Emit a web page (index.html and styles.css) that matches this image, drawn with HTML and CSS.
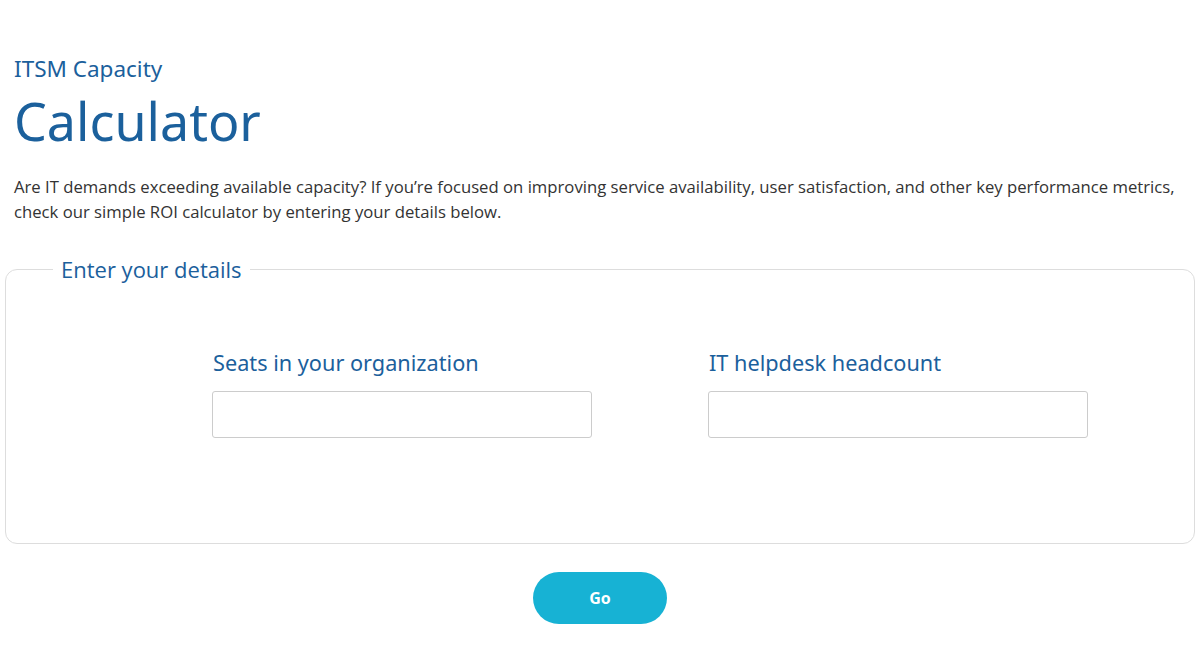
FILE: index.html
```html
<!DOCTYPE html>
<html lang="en">
<head>
  <meta charset="UTF-8">
  <title>ITSM Capacity Calculator</title>
  <meta name="viewport" content="width=device-width, initial-scale=1.0">
  <link rel="stylesheet" href="styles.css">
</head>
<body>

  <div class="page">
    <div class="intro">
      <h3 class="eyebrow">ITSM Capacity</h3>
      <h1 class="title">Calculator</h1>
      <p class="lead">Are IT demands exceeding available capacity? If you’re focused on improving service availability, user satisfaction, and other key performance metrics, check our simple ROI calculator by entering your details below.</p>
    </div>

    <form id="capacityForm">
      <fieldset class="details">
        <legend>Enter your details</legend>
        <div class="fields">
          <div class="field">
            <label for="seats">Seats in your organization</label>
            <input type="text" id="seats" name="seats">
          </div>
          <div class="field">
            <label for="headcount">IT helpdesk headcount</label>
            <input type="text" id="headcount" name="headcount">
          </div>
        </div>
      </fieldset>
      <div class="actions">
        <button type="submit">Go</button>
      </div>
    </form>
  </div>

</body>
</html>
```

FILE: styles.css
```css
body {
  margin: 0;
  font-family: 'Open Sans', sans-serif;
  background: #fff;
  color: #333;
}

.page {
  padding: 0 5px;
}

.intro {
  padding: 55px 9px 0;
}

.eyebrow {
  margin: 0;
  font-family: 'Noto Sans', sans-serif;
  font-weight: 400;
  font-size: 22.5px;
  line-height: 28px;
  color: #1b609c;
}

.title {
  margin: 6px 0 0;
  font-family: 'Noto Sans', sans-serif;
  font-weight: 400;
  font-size: 52px;
  line-height: 64px;
  color: #1b609c;
}

.lead {
  margin: 21px 0 0;
  font-size: 16.7px;
  line-height: 25px;
  color: #333;
}

.details {
  margin: 30px 0 0;
  padding: 0 0 0 47px;
  border: 1px solid #ddd;
  border-radius: 12px;
  height: 290px;
  box-sizing: border-box;
}

.details legend {
  padding: 0 8px;
  font-size: 22px;
  line-height: 30px;
  color: #1b609c;
}

.fields {
  display: grid;
  grid-template-columns: 380px 380px;
  column-gap: 116px;
  padding: 64px 0 0 159px;
}

.field label {
  display: block;
  font-family: 'Noto Sans', sans-serif;
  font-size: 21.7px;
  line-height: 30px;
  color: #1b609c;
  margin-bottom: 13px;
  padding-left: 1px;
}

.field input {
  box-sizing: border-box;
  width: 100%;
  height: 47px;
  border: 1px solid #ccc;
  border-radius: 3px;
  font-size: 16px;
  padding: 0 12px;
  outline: none;
}

.actions {
  display: flex;
  justify-content: center;
  padding-top: 28px;
}

button {
  width: 134px;
  height: 52px;
  background-color: #17b2d4;
  color: #fff;
  border: none;
  border-radius: 26px;
  font-family: 'Open Sans', sans-serif;
  font-weight: 700;
  font-size: 16px;
  cursor: pointer;
}
```
